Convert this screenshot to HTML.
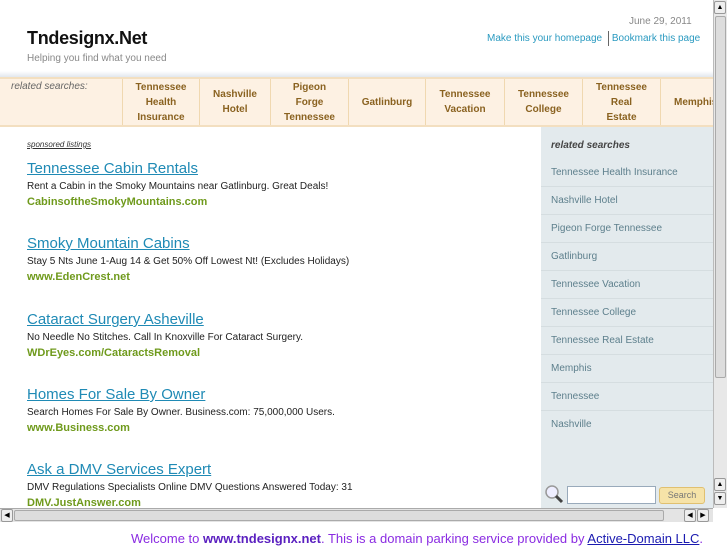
<!DOCTYPE html>
<html><head><meta charset="utf-8"><style>
*{margin:0;padding:0;box-sizing:border-box}
body{width:727px;height:545px;overflow:hidden;background:#fff;font-family:"Liberation Sans",sans-serif;position:relative}
.abs{position:absolute}
#title{left:27px;top:28px;font-size:18px;font-weight:bold;color:#111;letter-spacing:-0.3px}
#tag{left:27px;top:53px;font-size:10px;color:#888}
#date{left:629px;top:16px;font-size:10px;color:#888}
#links{left:487px;top:31px;font-size:10px;color:#2a9ac0;white-space:nowrap}
#band{left:0;top:71px;width:713px;height:7px;background:linear-gradient(#fff,#dde3ea)}
#nav{left:0;top:77px;width:713px;height:50px;background:#fdf1e3;border-top:2px solid #f3dfc0;border-bottom:2px solid #f3dfc0}
#nav .rs{position:absolute;left:11px;top:2px;font-size:10px;font-style:italic;color:#666}
#nav .c{position:absolute;top:0;height:46px;display:flex;align-items:center;justify-content:center;text-align:center;font-size:10px;font-weight:bold;color:#8a6220;line-height:15px;border-left:1px solid #f0d8b0}
#side{left:541px;top:127px;width:172px;height:381px;background:#e3eaed}
#side .h{position:absolute;left:10px;top:13px;font-size:10px;font-weight:bold;font-style:italic;color:#444}
#side .i{position:absolute;left:0;width:172px;height:28px;border-bottom:1px solid #d5dde0;font-size:10px;color:#5d7f8c;padding-left:10px;line-height:28px}
.ad{position:absolute;left:27px}
.ad .t{font-size:15px;color:#1f8ab5;text-decoration:underline;white-space:nowrap}
.ad .d{font-size:10px;color:#222;margin-top:4px;white-space:nowrap}
.ad .u{font-size:11px;font-weight:bold;color:#6f9a1c;margin-top:4px}
#spons{left:27px;top:140px;font-size:8px;font-style:italic;color:#333;text-decoration:underline}
#vs{left:713px;top:0;width:14px;height:508px;background:#e8e8e8;border-left:1px solid #bbb}
#hs{left:0;top:508px;width:713px;height:14px;background:#e4e4e4;border-top:1px solid #aaa}
.btn{position:absolute;width:12px;height:13px;background:#eee;border:1px solid #999;border-radius:2px;font-size:7px;text-align:center;line-height:11px;color:#000}
#foot{left:131px;top:522px;width:600px;height:23px;font-size:13px;color:#8a2be2;padding-top:9px;white-space:nowrap}
#foot b{color:#5a1fc0}
#foot a{color:#1a1ab0;text-decoration:underline}
</style></head><body>
<div class="abs" id="title">Tndesignx.Net</div>
<div class="abs" id="tag">Helping you find what you need</div>
<div class="abs" id="date">June 29, 2011</div>
<div class="abs" id="links">Make this your homepage <span style="display:inline-block;width:1px;height:15px;background:#666;vertical-align:middle;margin:0 3px"></span>Bookmark this page</div>
<div class="abs" id="band"></div>
<div class="abs" id="nav">
<div class="rs">related searches:</div>
<div class="c" style="left:122px;width:77px">Tennessee<br>Health<br>Insurance</div>
<div class="c" style="left:199px;width:71px">Nashville<br>Hotel</div>
<div class="c" style="left:270px;width:78px">Pigeon<br>Forge<br>Tennessee</div>
<div class="c" style="left:348px;width:77px">Gatlinburg</div>
<div class="c" style="left:425px;width:79px">Tennessee<br>Vacation</div>
<div class="c" style="left:504px;width:78px">Tennessee<br>College</div>
<div class="c" style="left:582px;width:78px">Tennessee<br>Real<br>Estate</div>
<div class="c" style="left:660px;width:70px;justify-content:flex-start;padding-left:13px">Memphis</div>
</div>
<div class="abs" id="side">
<div class="h">related searches</div>
<div class="i" style="top:32px">Tennessee Health Insurance</div>
<div class="i" style="top:60px">Nashville Hotel</div>
<div class="i" style="top:88px">Pigeon Forge Tennessee</div>
<div class="i" style="top:116px">Gatlinburg</div>
<div class="i" style="top:144px">Tennessee Vacation</div>
<div class="i" style="top:172px">Tennessee College</div>
<div class="i" style="top:200px">Tennessee Real Estate</div>
<div class="i" style="top:228px">Memphis</div>
<div class="i" style="top:256px">Tennessee</div>
<div class="i" style="top:284px;border:none">Nashville</div>
<svg class="abs" style="left:3px;top:357px" width="20" height="20"><circle cx="8" cy="8" r="6" fill="#eef" stroke="#999" stroke-width="1.5"/><line x1="12" y1="12" x2="18" y2="18" stroke="#444" stroke-width="3"/></svg>
<div class="abs" style="left:26px;top:359px;width:89px;height:18px;background:#fff;border:1px solid #9ab"></div>
<div class="abs" style="left:118px;top:360px;width:46px;height:17px;background:#f6e3a8;border:1px solid #e0c070;border-radius:3px;font-size:9px;color:#777;text-align:center;line-height:15px">Search</div>
</div>
<div class="abs" id="spons">sponsored listings</div>
<div class="ad" style="top:160px"><div class="t">Tennessee Cabin Rentals</div><div class="d">Rent a Cabin in the Smoky Mountains near Gatlinburg. Great Deals!</div><div class="u">CabinsoftheSmokyMountains.com</div></div>
<div class="ad" style="top:235px"><div class="t">Smoky Mountain Cabins</div><div class="d">Stay 5 Nts June 1-Aug 14 &amp; Get 50% Off Lowest Nt! (Excludes Holidays)</div><div class="u">www.EdenCrest.net</div></div>
<div class="ad" style="top:311px"><div class="t">Cataract Surgery Asheville</div><div class="d">No Needle No Stitches. Call In Knoxville For Cataract Surgery.</div><div class="u">WDrEyes.com/CataractsRemoval</div></div>
<div class="ad" style="top:386px"><div class="t">Homes For Sale By Owner</div><div class="d">Search Homes For Sale By Owner. Business.com: 75,000,000 Users.</div><div class="u">www.Business.com</div></div>
<div class="ad" style="top:461px"><div class="t">Ask a DMV Services Expert</div><div class="d">DMV Regulations Specialists Online DMV Questions Answered Today: 31</div><div class="u">DMV.JustAnswer.com</div></div>
<div class="abs" id="vs"><div class="btn" style="left:0;top:1px">▲</div><div class="abs" style="left:1px;top:16px;width:11px;height:362px;background:#ddd;border:1px solid #aaa;border-radius:2px"></div><div class="btn" style="left:0;top:478px">▲</div><div class="btn" style="left:0;top:492px">▼</div></div>
<div class="abs" id="hs"><div class="btn" style="left:1px;top:0">◀</div><div class="abs" style="left:14px;top:1px;height:11px;background:#ddd;border:1px solid #aaa;border-radius:2px;width:650px"></div><div class="btn" style="left:684px;top:0">◀</div><div class="btn" style="left:697px;top:0">▶</div></div>
<div class="abs" id="foot">Welcome to <b>www.tndesignx.net</b>. This is a domain parking service provided by <a>Active-Domain LLC</a>.</div>
</body></html>
